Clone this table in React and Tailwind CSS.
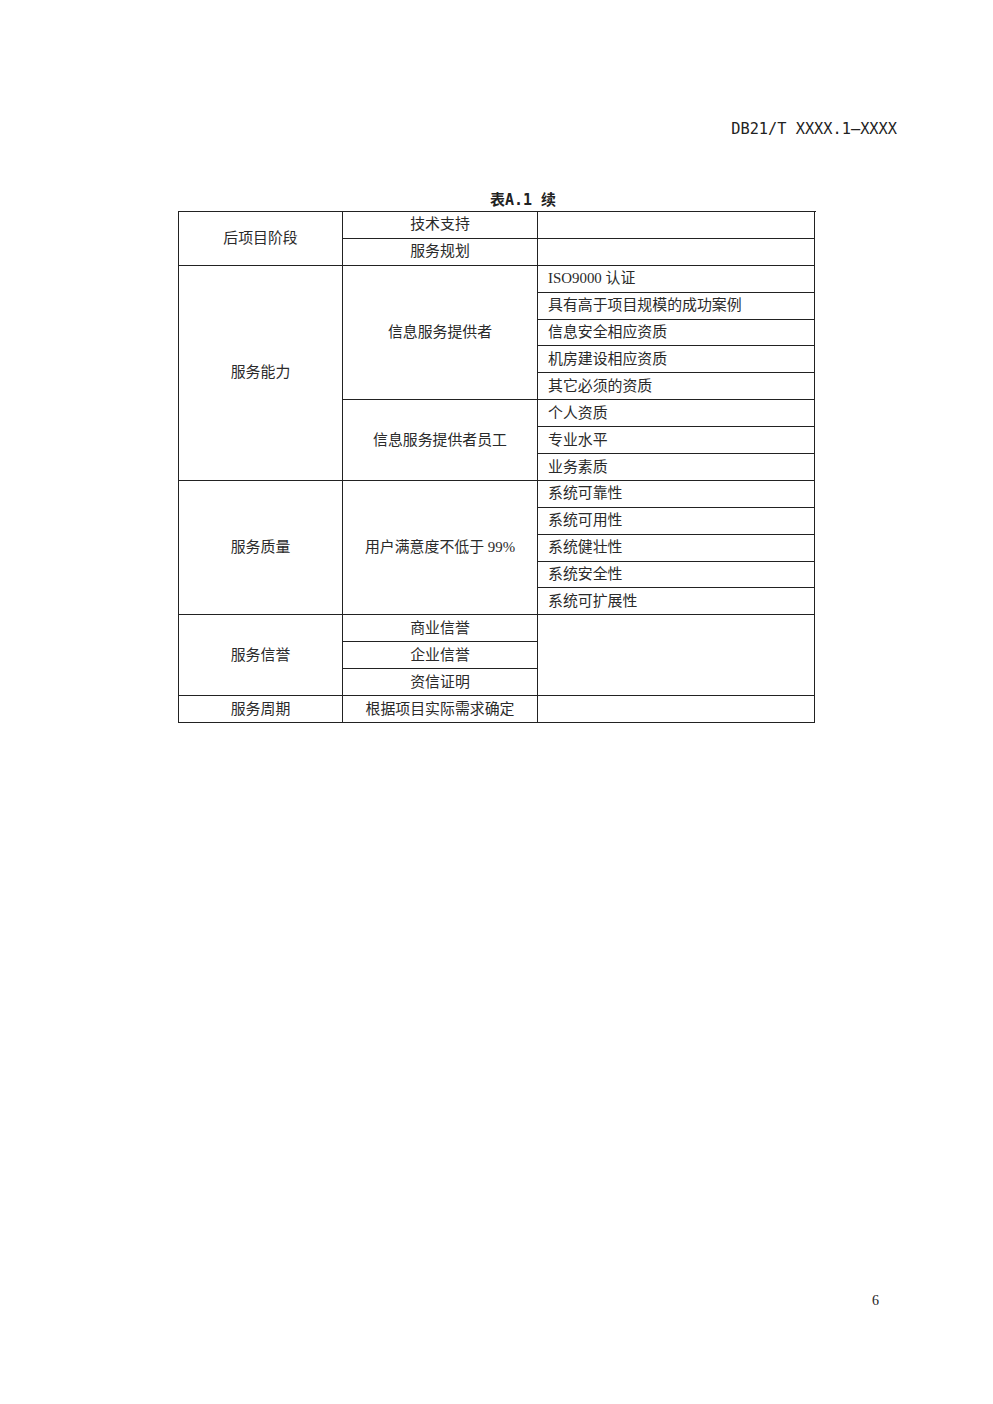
import React from "react";

function Cell({ children, cls = "", left = false }) {
  return (
    <div
      className={`border-r border-b border-[#222] flex items-center ${left ? "justify-start pl-[10px]" : "justify-center"} ${cls}`}
    >
      {children}
    </div>
  );
}

export default function App() {
  return (
    <div className="w-[993px] h-[1404px] bg-white text-[#222] relative font-['Noto_Sans_CJK_SC',sans-serif]">
      <div className="pt-[118px] pr-[96px] flex justify-end">
        <span className="text-[15.3px] leading-[22px] font-['DejaVu_Sans_Mono','Noto_Sans_CJK_SC',monospace]">DB21/T XXXX.1—XXXX</span>
      </div>
      <div className="mt-[46px] pl-[490px]">
        <span className="text-[15px] leading-[22px] font-bold font-['DejaVu_Sans_Mono','Noto_Sans_CJK_SC',monospace]">表A.1 续</span>
      </div>
      <div className="ml-[178px] mt-0 w-[638px]">
        <div className="grid grid-cols-[164px_195px_277px] grid-rows-[repeat(19,26.9px)] border-l-[1.5px] border-t-[1.5px] border-[#222] text-[14.9px] leading-none text-[#2a2a2a] font-['Liberation_Serif','Noto_Sans_CJK_SC',serif]">
          <Cell cls="row-span-2">后项目阶段</Cell>
          <Cell>技术支持</Cell>
          <Cell cls="border-r-[1.5px]" />
          <Cell>服务规划</Cell>
          <Cell cls="border-r-[1.5px]" />

          <Cell cls="row-span-8">服务能力</Cell>
          <Cell cls="row-span-5">信息服务提供者</Cell>
          <Cell left cls="border-r-[1.5px]">ISO9000 认证</Cell>
          <Cell left cls="border-r-[1.5px]">具有高于项目规模的成功案例</Cell>
          <Cell left cls="border-r-[1.5px]">信息安全相应资质</Cell>
          <Cell left cls="border-r-[1.5px]">机房建设相应资质</Cell>
          <Cell left cls="border-r-[1.5px]">其它必须的资质</Cell>
          <Cell cls="row-span-3">信息服务提供者员工</Cell>
          <Cell left cls="border-r-[1.5px]">个人资质</Cell>
          <Cell left cls="border-r-[1.5px]">专业水平</Cell>
          <Cell left cls="border-r-[1.5px]">业务素质</Cell>

          <Cell cls="row-span-5">服务质量</Cell>
          <Cell cls="row-span-5">用户满意度不低于 99%</Cell>
          <Cell left cls="border-r-[1.5px]">系统可靠性</Cell>
          <Cell left cls="border-r-[1.5px]">系统可用性</Cell>
          <Cell left cls="border-r-[1.5px]">系统健壮性</Cell>
          <Cell left cls="border-r-[1.5px]">系统安全性</Cell>
          <Cell left cls="border-r-[1.5px]">系统可扩展性</Cell>

          <Cell cls="row-span-3">服务信誉</Cell>
          <Cell>商业信誉</Cell>
          <Cell cls="row-span-3 border-r-[1.5px]" />
          <Cell>企业信誉</Cell>
          <Cell>资信证明</Cell>

          <Cell cls="border-b-[1.5px]">服务周期</Cell>
          <Cell cls="border-b-[1.5px]">根据项目实际需求确定</Cell>
          <Cell cls="border-b-[1.5px] border-r-[1.5px]" />
        </div>
      </div>
      <div className="absolute left-[872px] top-[1290px] text-[14px] font-['Liberation_Serif',serif]">6</div>
    </div>
  );
}
